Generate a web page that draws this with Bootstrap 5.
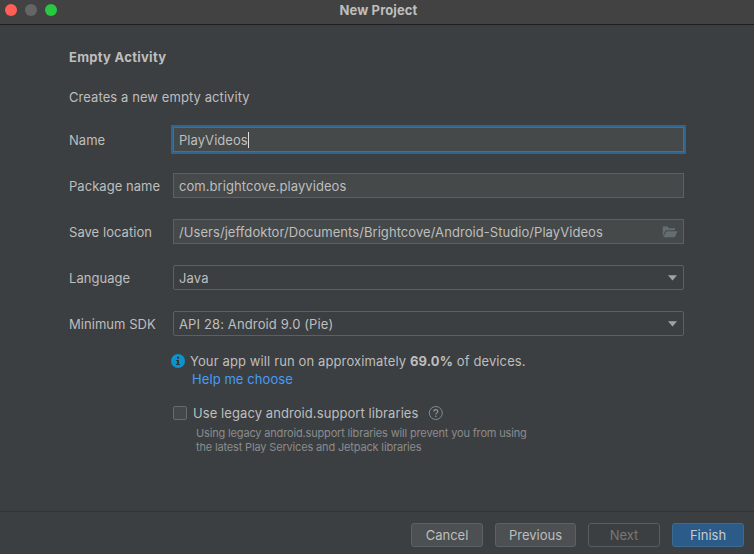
<!DOCTYPE html>
<html lang="en">
<head>
<meta charset="utf-8">
<meta name="viewport" content="width=device-width, initial-scale=1">
<title>New Project</title>
<link href="https://cdn.jsdelivr.net/npm/bootstrap@5.3.0/dist/css/bootstrap.min.css" rel="stylesheet">
<style>
body{font:13px/18px Inter,"Liberation Sans",sans-serif;letter-spacing:.08px;color:#bebebe;background:#3c3f41}
.titlebar{height:25px;background:#424242;border-bottom:1px solid #1d1f20;padding:0 5px}
.lights{gap:8px;width:60px;padding-top:4px}
.light{width:12px;height:12px}
.red{background:#ff5f57}.grey{background:#656565}.green{background:#28c840}
.title{font-size:13px;line-height:20px;letter-spacing:.12px;padding-right:57px}
.body-pane{padding:23px 70px 0 69px}
.heading{font-size:13px;letter-spacing:.28px;margin-bottom:20px}
.intro{margin-bottom:21px}
.wizard-row{height:25px;margin-bottom:21px}
.field-label{width:104px;padding-top:2px;letter-spacing:.04px}
.form-control.field{height:25px;padding:2px 5px 0;border:1px solid #5e6060;border-radius:0;background:#45494a;color:#bebebe;font-size:13px;line-height:21px;letter-spacing:.06px;white-space:nowrap}
.form-control.combo{background:#3c3f41;border-radius:2px;border-color:#5e6060;padding-right:6px;letter-spacing:.13px}
.form-control.focused{border-color:#466d94;box-shadow:0 0 0 2px #2f6592}
.caret{width:1px;height:16px;background:#ddd}
.hint{padding-left:102px;margin-top:-5px}
.link{color:#459cfb;padding-left:21px;letter-spacing:.08px}
.info-text{letter-spacing:.12px;margin-left:5px}
.check-box{width:14px;height:14px;border:1px solid #666a6b;border-radius:2px;background:#43494a}
.legacy{padding-left:104px;margin-top:16px}
.legacy-text{margin-left:6px}
.note{padding-left:127px;margin-top:4px;font-size:11px;line-height:14px;letter-spacing:-.16px;color:#8a8c8d}
.footer-bar{height:43px;border-top:1px solid #323435;padding:11px 10px 0;gap:12px}
.btn.action{width:72px;height:24px;padding:0;font-size:13px;line-height:22px;letter-spacing:0;border:1px solid #5e6161;border-radius:3px;background:#4c5052;color:#bebebe}
.btn.action.wide{width:81px}
.btn.action.off{background:#3c3f41;color:#777;opacity:1;border-color:#5a5d5e}
.btn.action.main{background:#2b5b88;border-color:#3d6b90;color:#c6cbd0}
</style>
</head>
<body class="vh-100 overflow-hidden d-flex flex-column">
<header class="titlebar d-flex flex-shrink-0">
  <div class="lights d-flex">
    <span class="light red rounded-circle"></span><span class="light grey rounded-circle"></span><span class="light green rounded-circle"></span>
  </div>
  <div class="title flex-grow-1 text-center fw-bold">New Project</div>
</header>

<main class="body-pane flex-grow-1">
  <h1 class="heading fw-bold lh-base">Empty Activity</h1>
  <p class="intro">Creates a new empty activity</p>

  <div class="wizard-row d-flex align-items-center">
    <div class="field-label flex-shrink-0">Name</div>
    <div class="form-control field focused d-flex align-items-center">PlayVideos<span class="caret"></span></div>
  </div>
  <div class="wizard-row d-flex align-items-center">
    <div class="field-label flex-shrink-0">Package name</div>
    <div class="form-control field">com.brightcove.playvideos</div>
  </div>
  <div class="wizard-row d-flex align-items-center">
    <div class="field-label flex-shrink-0">Save location</div>
    <div class="form-control field d-flex align-items-center justify-content-between">/Users/jeffdoktor/Documents/Brightcove/Android-Studio/PlayVideos
      <svg width="16" height="12" viewBox="0 0 16 12" fill="#646d72"><path d="M.7 10.5V.5h4.8l1.5 1.7h6V4.3H3.7z"/><path d="M4.4 5.2h11.2l-2.9 6H1.2z"/></svg>
    </div>
  </div>
  <div class="wizard-row d-flex align-items-center">
    <div class="field-label flex-shrink-0">Language</div>
    <div class="form-control field combo d-flex align-items-center justify-content-between">Java
      <svg width="9" height="6" viewBox="0 0 9 6" fill="#a0a3a5"><path d="M0 .3h9L4.5 5.6z"/></svg>
    </div>
  </div>
  <div class="wizard-row d-flex align-items-center">
    <div class="field-label flex-shrink-0">Minimum SDK</div>
    <div class="form-control field combo d-flex align-items-center justify-content-between">API 28: Android 9.0 (Pie)
      <svg width="9" height="6" viewBox="0 0 9 6" fill="#a0a3a5"><path d="M0 .3h9L4.5 5.6z"/></svg>
    </div>
  </div>

  <div class="hint">
    <div class="d-flex align-items-center">
      <svg width="14" height="14" viewBox="0 0 14 14"><circle cx="7" cy="7" r="7" fill="#0a94cb"/><path d="M6 2.7h2v2H6zM6 5.9h2v5.2H6zM5 5.9h2v1.2H5zM5 10h4v1.1H5z" fill="#2f383d"/></svg>
      <span class="info-text">Your app will run on approximately <b>69.0%</b> of devices.</span>
    </div>
    <a class="link d-block text-decoration-none" href="#">Help me choose</a>
  </div>

  <div class="legacy d-flex align-items-center">
    <span class="check-box"></span>
    <span class="legacy-text">Use legacy android.support libraries</span>
    <svg class="ms-2" width="18" height="14" viewBox="-2 0 18 14" fill="none" overflow="visible"><circle cx="7.8" cy="7" r="6.5" stroke="#7f8b91"/><path d="M5.8 5.6C5.8 3 9.8 3 9.8 5.4c0 1.4-2 1.5-2 3" stroke="#929a9e" stroke-width="1.1"/><circle cx="7.8" cy="10.3" r=".8" fill="#929a9e"/></svg>
  </div>
  <div class="note">Using legacy android.support libraries will prevent you from using<br>the latest Play Services and Jetpack libraries</div>
</main>

<footer class="footer-bar d-flex justify-content-end flex-shrink-0">
  <button class="btn action" type="button">Cancel</button>
  <button class="btn action wide" type="button">Previous</button>
  <button class="btn action off" type="button" disabled>Next</button>
  <button class="btn action main" type="button">Finish</button>
</footer>
<script src="https://cdn.jsdelivr.net/npm/bootstrap@5.3.0/dist/js/bootstrap.bundle.min.js"></script>
</body>
</html>
